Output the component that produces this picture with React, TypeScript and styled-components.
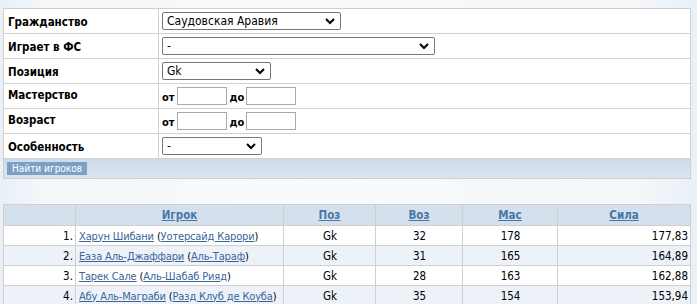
import React from "react";
import styled, { createGlobalStyle } from "styled-components";

const Global = createGlobalStyle`
  html, body { margin: 0; padding: 0; }
  body {
    background: linear-gradient(to right, #e8eff6 0px, #f4f7fa 40px, #f8fafc 300px, #f4f7fa 640px, #e9f0f6 697px);
    font-family: Tahoma, "DejaVu Sans Condensed", "DejaVu Sans", sans-serif;
    color: #000;
  }
`;

const Page = styled.div`
  padding: 8px 6px 0 3px;
  width: 688px;
`;

const FormPanel = styled.div`
  border: 1px solid #cfcfcf;
  background: #fff;
`;

const FormRow = styled.div`
  display: grid;
  grid-template-columns: 155px 1fr;
  height: 24px;
  border-bottom: 1px solid #d0d0d0;
`;

const Label = styled.div<{ $top?: boolean }>`
  border-right: 1px solid #d0d0d0;
  padding-left: 4px;
  font-weight: bold;
  font-size: 11.5px;
  display: flex;
  align-items: ${(p) => (p.$top ? "flex-start" : "center")};
  padding-top: ${(p) => (p.$top ? "4px" : "1px")};
`;

const Field = styled.div`
  display: flex;
  align-items: center;
  padding-left: 3px;
  gap: 2px;
  font-size: 11px;
  font-weight: bold;
`;

const SelectWrap = styled.span<{ $w: number }>`
  position: relative;
  display: inline-block;
  width: ${(p) => p.$w}px;
  height: 18px;
`;

const Select = styled.select`
  appearance: none;
  -webkit-appearance: none;
  width: 100%;
  height: 100%;
  box-sizing: border-box;
  border: 1px solid #767676;
  border-radius: 2px;
  background: #fff;
  font-family: Tahoma, "DejaVu Sans Condensed", "DejaVu Sans", sans-serif;
  font-size: 12px;
  padding: 0 0 0 4px;
  color: #000;
  margin: 0;
`;

const Chevron = styled.svg`
  position: absolute;
  right: 6px;
  top: 5px;
  width: 10px;
  height: 8px;
  pointer-events: none;
`;

const NumInput = styled.input`
  width: 50px;
  height: 18px;
  box-sizing: border-box;
  border: 1px solid #a9a9a9;
  margin: 0 1px 0 0;
  padding: 0;
`;

const RangeText = styled.span`
  font-size: 11px;
  font-weight: bold;
  margin-top: 3px;
`;

const ButtonBar = styled.div`
  height: 19px;
  background: linear-gradient(to bottom, #cddbe8, #dae4ee);
  display: flex;
  align-items: center;
  padding-left: 3px;
`;

const SearchButton = styled.button`
  background: #7b9fc5;
  color: #fff;
  border: none;
  font-family: Tahoma, "DejaVu Sans Condensed", "DejaVu Sans", sans-serif;
  font-size: 10px;
  height: 13px;
  padding: 0 5px;
  line-height: 13px;
  margin: 0;
`;

const Results = styled.table`
  margin-top: 25px;
  width: 688px;
  border-collapse: collapse;
  background: #fff;
  font-size: 11.5px;
  table-layout: fixed;
`;

const HeadCell = styled.th<{ $w?: number }>`
  width: ${(p) => (p.$w ? `${p.$w}px` : "auto")};
  height: 20px;
  background: #d4e1ec;
  border: 1px solid #cfcfcf;
  padding: 0;
  text-align: center;
  font-weight: bold;
  font-size: 11.5px;
`;

const HeadLink = styled.a`
  color: #4876a6;
  text-decoration: underline;
`;

const Row = styled.tr<{ $alt: boolean }>`
  background: ${(p) => (p.$alt ? "#edf2f8" : "#fff")};
`;

const Cell = styled.td<{ $align: "left" | "right" | "center" }>`
  height: 19px;
  border: 1px solid #d0d0d0;
  padding: 0 2px 0 3px;
  text-align: ${(p) => p.$align};
  white-space: nowrap;
  overflow: hidden;
`;

const PlayerText = styled.span`
  font-size: 11px;
  letter-spacing: -0.15px;
`;

const PlayerLink = styled.a`
  color: #3a659a;
  text-decoration: underline;
`;

const ChevronIcon = () => (
  <Chevron viewBox="0 0 10 8">
    <path d="M1 2 L5 6 L9 2" fill="none" stroke="#000" strokeWidth="2" />
  </Chevron>
);

const Dropdown = ({ w, value }: { w: number; value: string }) => (
  <SelectWrap $w={w}>
    <Select defaultValue={value}>
      <option value={value}>{value}</option>
    </Select>
    <ChevronIcon />
  </SelectWrap>
);

const players = [
  { n: 1, name: "Харун Шибани", club: "Уотерсайд Карори", age: 32, mas: 178, power: "177,83" },
  { n: 2, name: "Еаза Аль-Джаффари", club: "Аль-Тараф", age: 31, mas: 165, power: "164,89" },
  { n: 3, name: "Тарек Сале", club: "Аль-Шабаб Рияд", age: 28, mas: 163, power: "162,88" },
  { n: 4, name: "Абу Аль-Маграби", club: "Разд Клуб де Коуба", age: 35, mas: 154, power: "153,94" },
];

export default function App() {
  return (
    <>
      <Global />
      <Page>
        <FormPanel>
          <FormRow>
            <Label>Гражданство</Label>
            <Field>
              <Dropdown w={179} value="Саудовская Аравия" />
            </Field>
          </FormRow>
          <FormRow>
            <Label>Играет в ФС</Label>
            <Field>
              <Dropdown w={273} value="-" />
            </Field>
          </FormRow>
          <FormRow>
            <Label>Позиция</Label>
            <Field>
              <Dropdown w={109} value="Gk" />
            </Field>
          </FormRow>
          <FormRow>
            <Label $top>Мастерство</Label>
            <Field>
              <RangeText>от</RangeText>
              <NumInput />
              <RangeText>до</RangeText>
              <NumInput />
            </Field>
          </FormRow>
          <FormRow>
            <Label $top>Возраст</Label>
            <Field>
              <RangeText>от</RangeText>
              <NumInput />
              <RangeText>до</RangeText>
              <NumInput />
            </Field>
          </FormRow>
          <FormRow>
            <Label>Особенность</Label>
            <Field>
              <Dropdown w={100} value="-" />
            </Field>
          </FormRow>
          <ButtonBar>
            <SearchButton>Найти игроков</SearchButton>
          </ButtonBar>
        </FormPanel>

        <Results>
          <thead>
            <tr>
              <HeadCell $w={71}></HeadCell>
              <HeadCell $w={207}><HeadLink href="#">Игрок</HeadLink></HeadCell>
              <HeadCell $w={91}><HeadLink href="#">Поз</HeadLink></HeadCell>
              <HeadCell $w={86}><HeadLink href="#">Воз</HeadLink></HeadCell>
              <HeadCell $w={94}><HeadLink href="#">Мас</HeadLink></HeadCell>
              <HeadCell><HeadLink href="#">Сила</HeadLink></HeadCell>
            </tr>
          </thead>
          <tbody>
            {players.map((p, i) => (
              <Row key={p.n} $alt={i % 2 === 1}>
                <Cell $align="right">{p.n}.</Cell>
                <Cell $align="left">
                  <PlayerText>
                    <PlayerLink href="#">{p.name}</PlayerLink> (<PlayerLink href="#">{p.club}</PlayerLink>)
                  </PlayerText>
                </Cell>
                <Cell $align="center">Gk</Cell>
                <Cell $align="center">{p.age}</Cell>
                <Cell $align="center">{p.mas}</Cell>
                <Cell $align="right">{p.power}</Cell>
              </Row>
            ))}
          </tbody>
        </Results>
      </Page>
    </>
  );
}
